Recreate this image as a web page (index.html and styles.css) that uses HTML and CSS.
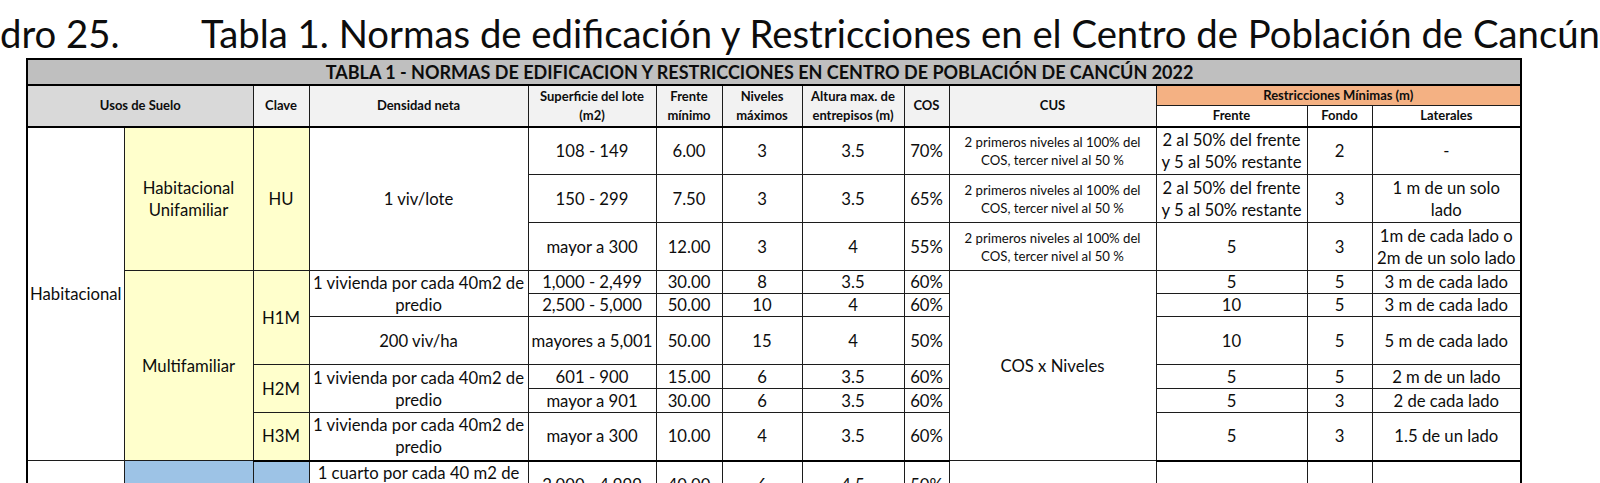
FILE: index.html
```html
<!DOCTYPE html>
<html lang="es">
<head>
<meta charset="utf-8">
<title>Tabla 1. Normas de edificación</title>
<link rel="stylesheet" href="styles.css">
</head>
<body>
<div class="doc-title">
  <span class="num">dro 25.</span>
  <span class="text">Tabla 1. Normas de edificación y Restricciones en el Centro de Población de Cancún</span>
</div>
<div class="wrap">
<table class="norms">
  <colgroup>
    <col style="width:97px"><col style="width:129px"><col style="width:56px"><col style="width:219px">
    <col style="width:128px"><col style="width:66px"><col style="width:80px"><col style="width:102px">
    <col style="width:45px"><col style="width:207px"><col style="width:151px"><col style="width:65px">
    <col style="width:149px">
  </colgroup>
  <thead>
    <tr class="ttl"><th colspan="13">TABLA 1 - NORMAS DE EDIFICACION Y RESTRICCIONES EN CENTRO DE POBLACIÓN DE CANCÚN 2022</th></tr>
    <tr class="hA">
      <th colspan="2" rowspan="2" class="dark hb">Usos de Suelo</th>
      <th rowspan="2" class="hb">Clave</th>
      <th rowspan="2" class="hb">Densidad neta</th>
      <th rowspan="2" class="hb">Superficie del lote<br>(m2)</th>
      <th rowspan="2" class="hb">Frente<br>mínimo</th>
      <th rowspan="2" class="hb">Niveles<br>máximos</th>
      <th rowspan="2" class="hb">Altura max. de<br>entrepisos (m)</th>
      <th rowspan="2" class="hb">COS</th>
      <th rowspan="2" class="hb">CUS</th>
      <th colspan="3" class="orange">Restricciones Mínimas (m)</th>
    </tr>
    <tr class="hB">
      <th class="white hb">Frente</th>
      <th class="white hb">Fondo</th>
      <th class="white hb">Laterales</th>
    </tr>
  </thead>
  <tbody>
    <tr class="tall">
      <td rowspan="9">Habitacional</td>
      <td rowspan="3" class="yel">Habitacional<br>Unifamiliar</td>
      <td rowspan="3" class="yel">HU</td>
      <td rowspan="3">1 viv/lote</td>
      <td>108 - 149</td><td>6.00</td><td>3</td><td>3.5</td><td>70%</td>
      <td class="small">2 primeros niveles al 100% del<br>COS, tercer nivel al 50 %</td>
      <td>2 al 50% del frente<br>y 5 al 50% restante</td><td>2</td><td>-</td>
    </tr>
    <tr class="tall">
      <td>150 - 299</td><td>7.50</td><td>3</td><td>3.5</td><td>65%</td>
      <td class="small">2 primeros niveles al 100% del<br>COS, tercer nivel al 50 %</td>
      <td>2 al 50% del frente<br>y 5 al 50% restante</td><td>3</td><td>1 m de un solo<br>lado</td>
    </tr>
    <tr class="tall">
      <td>mayor a 300</td><td>12.00</td><td>3</td><td>4</td><td>55%</td>
      <td class="small">2 primeros niveles al 100% del<br>COS, tercer nivel al 50 %</td>
      <td>5</td><td>3</td><td>1m de cada lado o<br>2m de un solo lado</td>
    </tr>
    <tr class="short">
      <td rowspan="6" class="yel">Multifamiliar</td>
      <td rowspan="3" class="yel">H1M</td>
      <td rowspan="2">1 vivienda por cada 40m2 de<br>predio</td>
      <td>1,000 - 2,499</td><td>30.00</td><td>8</td><td>3.5</td><td>60%</td>
      <td rowspan="6">COS x Niveles</td>
      <td>5</td><td>5</td><td>3 m de cada lado</td>
    </tr>
    <tr class="short">
      <td>2,500 - 5,000</td><td>50.00</td><td>10</td><td>4</td><td>60%</td>
      <td>10</td><td>5</td><td>3 m de cada lado</td>
    </tr>
    <tr class="tall">
      <td>200 viv/ha</td>
      <td>mayores a 5,001</td><td>50.00</td><td>15</td><td>4</td><td>50%</td>
      <td>10</td><td>5</td><td>5 m de cada lado</td>
    </tr>
    <tr class="mid">
      <td rowspan="2" class="yel">H2M</td>
      <td rowspan="2">1 vivienda por cada 40m2 de<br>predio</td>
      <td>601 - 900</td><td>15.00</td><td>6</td><td>3.5</td><td>60%</td>
      <td>5</td><td>5</td><td>2 m de un lado</td>
    </tr>
    <tr class="mid">
      <td>mayor a 901</td><td>30.00</td><td>6</td><td>3.5</td><td>60%</td>
      <td>5</td><td>3</td><td>2 de cada lado</td>
    </tr>
    <tr class="tall end">
      <td class="yel">H3M</td>
      <td>1 vivienda por cada 40m2 de<br>predio</td>
      <td>mayor a 300</td><td>10.00</td><td>4</td><td>3.5</td><td>60%</td>
      <td>5</td><td>3</td><td>1.5 de un lado</td>
    </tr>
    <tr class="tall">
      <td></td>
      <td class="blue"></td>
      <td class="blue"></td>
      <td class="top">1 cuarto por cada 40 m2 de<br>predio</td>
      <td>2,000 - 4,999</td><td>40.00</td><td>6</td><td>4.5</td><td>50%</td>
      <td></td><td></td><td></td><td></td>
    </tr>
  </tbody>
</table>
</div>
</body>
</html>
```

FILE: styles.css
```css
* { box-sizing: border-box; }
html, body { margin: 0; padding: 0; background: #fff; }
body {
  font-family: Lato, "Liberation Sans", sans-serif;
  color: #0d0d0d;
  width: 1600px;
  height: 483px;
  overflow: hidden;
}
.doc-title {
  display: flex;
  height: 58px;
  padding-top: 11px;
  font-size: 38.3px;
  line-height: 45px;
  white-space: nowrap;
}
.doc-title .num { flex: none; width: 201px; }
.wrap { padding-left: 26px; }

.norms {
  border-collapse: collapse;
  table-layout: fixed;
  width: 1494px;
  border: 2px solid #000;
}
.norms td, .norms th {
  border: 1px solid #1c1c1c;
  padding: 0 1px;
  text-align: center;
  vertical-align: middle;
  white-space: nowrap;
  overflow: hidden;
}
.norms td { font-size: 16.7px; line-height: 22px; font-weight: 400; }
.norms th { font-size: 13px; line-height: 19px; font-weight: 700; background: #f2f2f2; }

.ttl th {
  height: 26px;
  background: #bfbfbf;
  font-size: 18px;
  line-height: 22px;
  padding-right: 30px;
  border-bottom: 2px solid #000;
}
.hA th { height: 20px; }
.hB th { height: 21px; }
.norms th.dark { background: #d9d9d9; }
.norms th.orange { background: #f4b183; }
.norms th.white { background: #fff; }
.norms th.hb { border-bottom: 2px solid #000; }

.tall td { height: 48px; }
.short td { height: 22px; }
.mid td { height: 24px; }
.end td { border-bottom: 2px solid #000; }

.norms td.yel { background: #ffffcc; }
.norms td.blue { background: #9dc3e6; }
.norms td.small { font-size: 13.2px; line-height: 18px; }
.norms td.top { vertical-align: top; }
```
